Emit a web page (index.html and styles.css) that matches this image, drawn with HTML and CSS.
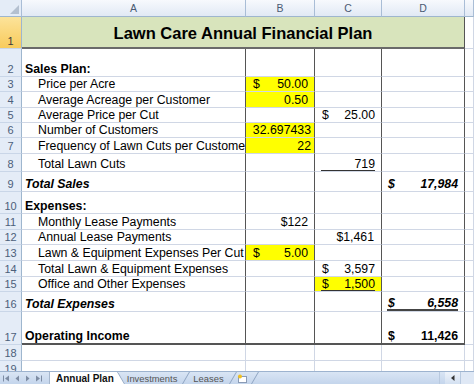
FILE: index.html
```html
<!DOCTYPE html>
<html>
<head>
<meta charset="utf-8">
<link rel="stylesheet" href="styles.css">
</head>
<body>
<div class="app">
  <div class="sheet">
    <table class="grid">
      <colgroup>
        <col class="c-rh"><col class="c-a"><col class="c-b"><col class="c-c"><col class="c-d"><col class="c-e">
      </colgroup>
      <thead>
        <tr class="hdr"><th class="corner"><span class="tri"></span></th><th>A</th><th>B</th><th>C</th><th>D</th><th></th></tr>
      </thead>
      <tbody>
        <tr class="r1"><th class="rh sel">1</th><td colspan="4" class="title">Lawn Care Annual Financial Plan</td><td></td></tr>
        <tr class="r2"><th class="rh">2</th><td class="a lbl bold">Sales Plan:</td><td class="b"></td><td class="c"></td><td class="d"></td><td></td></tr>
        <tr class="r3"><th class="rh">3</th><td class="a ind">Price per Acre</td><td class="b fill"><span class="acct"><span>$</span><span>50.00</span></span></td><td class="c"></td><td class="d"></td><td></td></tr>
        <tr class="r4"><th class="rh">4</th><td class="a ind">Average Acreage per Customer</td><td class="b fill num pr6">0.50</td><td class="c"></td><td class="d"></td><td></td></tr>
        <tr class="r5"><th class="rh">5</th><td class="a ind">Average Price per Cut</td><td class="b"></td><td class="c"><span class="acct"><span>$</span><span>25.00</span></span></td><td class="d"></td><td></td></tr>
        <tr class="r6"><th class="rh">6</th><td class="a ind">Number of Customers</td><td class="b fill num pr3">32.697433</td><td class="c"></td><td class="d"></td><td></td></tr>
        <tr class="r7"><th class="rh">7</th><td class="a ind">Frequency of Lawn Cuts per Customer</td><td class="b fill num pr3">22</td><td class="c"></td><td class="d"></td><td></td></tr>
        <tr class="r8"><th class="rh">8</th><td class="a ind">Total Lawn Cuts</td><td class="b"></td><td class="c"><span class="acct ul"><span></span><span>719</span></span></td><td class="d"></td><td></td></tr>
        <tr class="r9"><th class="rh">9</th><td class="a lbl bold ital">Total Sales</td><td class="b"></td><td class="c"></td><td class="d bold ital"><span class="acct"><span>$</span><span>17,984</span></span></td><td></td></tr>
        <tr class="r10"><th class="rh">10</th><td class="a lbl bold">Expenses:</td><td class="b"></td><td class="c"></td><td class="d"></td><td></td></tr>
        <tr class="r11"><th class="rh">11</th><td class="a ind">Monthly Lease Payments</td><td class="b num pr6">$122</td><td class="c"></td><td class="d"></td><td></td></tr>
        <tr class="r12"><th class="rh">12</th><td class="a ind">Annual Lease Payments</td><td class="b"></td><td class="c num pr7">$1,461</td><td class="d"></td><td></td></tr>
        <tr class="r13"><th class="rh">13</th><td class="a ind">Lawn &amp; Equipment Expenses Per Cut</td><td class="b fill"><span class="acct"><span>$</span><span>5.00</span></span></td><td class="c"></td><td class="d"></td><td></td></tr>
        <tr class="r14"><th class="rh">14</th><td class="a ind">Total Lawn &amp; Equipment Expenses</td><td class="b"></td><td class="c"><span class="acct"><span>$</span><span>3,597</span></span></td><td class="d"></td><td></td></tr>
        <tr class="r15"><th class="rh">15</th><td class="a ind">Office and Other Expenses</td><td class="b"></td><td class="c fill"><span class="acct ul"><span>$</span><span>1,500</span></span></td><td class="d"></td><td></td></tr>
        <tr class="r16"><th class="rh">16</th><td class="a lbl bold ital">Total Expenses</td><td class="b"></td><td class="c"></td><td class="d bold ital"><span class="acct ul2"><span>$</span><span>6,558</span></span></td><td></td></tr>
        <tr class="r17 last"><th class="rh">17</th><td class="a lbl bold">Operating Income</td><td class="b"></td><td class="c"></td><td class="d bold"><span class="acct"><span>$</span><span>11,426</span></span></td><td></td></tr>
        <tr class="r18"><th class="rh">18</th><td></td><td></td><td></td><td></td><td></td></tr>
        <tr class="r19"><th class="rh">19</th><td></td><td></td><td></td><td></td><td></td></tr>
      </tbody>
    </table>
  </div>
  <div class="tabbar">
    <div class="nav">
      <svg width="7" height="7" viewBox="0 0 7 7"><rect x="0" y="0.5" width="1" height="6" fill="#7d8ca3"/><path d="M6 0.5 L2 3.5 L6 6.5 Z" fill="#7d8ca3"/></svg>
      <svg width="5" height="7" viewBox="0 0 5 7"><path d="M4 0.5 L0.5 3.5 L4 6.5 Z" fill="#7d8ca3"/></svg>
      <svg width="5" height="7" viewBox="0 0 5 7"><path d="M1 0.5 L4.5 3.5 L1 6.5 Z" fill="#7d8ca3"/></svg>
      <svg width="7" height="7" viewBox="0 0 7 7"><path d="M1 0.5 L5 3.5 L1 6.5 Z" fill="#7d8ca3"/><rect x="6" y="0.5" width="1" height="6" fill="#7d8ca3"/></svg>
    </div>
    <div class="tab active">Annual Plan</div>
    <div class="tab">Investments</div>
    <div class="tab">Leases</div>
    <div class="tab newsheet"><svg width="11" height="9" viewBox="0 0 11 9"><rect x="1.5" y="2.5" width="8" height="6" fill="#fff" stroke="#8a9bb5"/><circle cx="3" cy="2.5" r="2" fill="#f0c020"/></svg></div>
    <div class="tab endcap"></div>
    <div class="spacer"></div>
    <div class="hscroll"><span class="sbtn"><svg width="4" height="6" viewBox="0 0 4 6"><path d="M3.5 0 L0 3 L3.5 6 Z" fill="#333"/></svg></span><span class="track"></span></div>
  </div>
</div>
</body>
</html>
```

FILE: styles.css
```css
html, body {
  margin: 0;
  padding: 0;
  width: 474px;
  height: 384px;
  overflow: hidden;
  background: #fff;
}
body {
  font-family: "Liberation Sans", Arial, sans-serif;
}
.app {
  display: flex;
  flex-direction: column;
  width: 474px;
  height: 384px;
  overflow: hidden;
}
.sheet {
  flex: 1;
  min-height: 0;
  overflow: hidden;
}
.grid {
  border-collapse: separate;
  border-spacing: 0;
  table-layout: fixed;
  width: 474px;
  font-size: 12.3px;
  color: #000;
}
.c-rh { width: 22px; }
.c-a { width: 224px; }
.c-b { width: 69px; }
.c-c { width: 67px; }
.c-d { width: 83px; }
.c-e { width: 9px; }

.grid td, .grid th {
  padding: 0;
  border-right: 1px solid #d0d7e5;
  border-bottom: 1px solid #d0d7e5;
  overflow: hidden;
  white-space: nowrap;
  vertical-align: bottom;
  line-height: 13px;
  box-sizing: border-box;
  text-align: left;
  font-weight: normal;
}

/* column headers */
.hdr { height: 17px; }
.hdr th {
  background: linear-gradient(#f7f9fd, #e1e9f5);
  border-right-color: #a9bdd6;
  border-bottom-color: #9eb6ce;
  font-size: 10.5px;
  color: #4a5b73;
  text-align: center;
  vertical-align: middle;
}
.hdr th.corner {
  position: relative;
  background: #e4ecf7;
}
.tri {
  position: absolute;
  right: 2px;
  bottom: 2px;
  width: 0;
  height: 0;
  border-left: 9px solid transparent;
  border-bottom: 9px solid #b4c0d0;
}

/* row headers */
.grid th.rh {
  background: #e4ecf7;
  border-right-color: #9eb6ce;
  border-bottom-color: #c9d6e8;
  color: #4c5f7a;
  font-size: 11px;
  text-align: center;
  line-height: 12px;
  padding-bottom: 1px;
}
.grid th.rh.sel {
  background: linear-gradient(#fce39a, #f8cb5c);
  color: #3b3b3b;
}

/* row heights */
.r1 { height: 32px; }
.r2 { height: 28px; }
.r3 { height: 15px; }
.r4 { height: 16px; }
.r5 { height: 15px; }
.r6 { height: 15px; }
.r7 { height: 16px; }
.r8 { height: 18px; }
.r9 { height: 20px; }
.r10 { height: 22px; }
.r11 { height: 16px; }
.r12 { height: 15px; }
.r13 { height: 16px; }
.r14 { height: 16px; }
.r15 { height: 15px; }
.r16 { height: 20px; }
.r17 { height: 33px; }
.r18 { height: 16px; }
.r19 { height: 16px; }

/* title */
.grid td.title {
  background: #d8e4bc;
  font-weight: bold;
  font-size: 16.5px;
  text-align: center;
  vertical-align: middle;
  line-height: 18px;
  padding-top: 1px;
  border-right: 1px solid #555;
  border-bottom: 2px solid #6a6a6a;
}

/* framed table columns */
.grid td.a, .grid td.b, .grid td.c, .grid td.d {
  border-right-color: #555;
}
.grid .last td.a, .grid .last td.b, .grid .last td.c, .grid .last td.d {
  border-bottom: 2px solid #555;
}

.grid td.lbl { padding-left: 3px; }
.grid td.ind { padding-left: 16px; }
.grid td.bold { font-weight: bold; }
.grid td.ital { font-style: italic; }
.grid td.num { text-align: right; }
.grid td.pr3 { padding-right: 3px; }
.grid td.pr6 { padding-right: 6px; }
.grid td.pr7 { padding-right: 7px; }
.grid td.fill { background: #ffff00; }

.acct {
  display: flex;
  justify-content: space-between;
  padding: 0 6px 0 7px;
}
.d .acct { padding: 0 6px 0 6px; }
.acct.ul {
  margin: 0 6px 0 6px;
  padding: 0 0 0 1px;
  border-bottom: 1px solid #333;
  line-height: 12px;
}
.acct.ul2 {
  margin: 0 6px 0 5px;
  padding: 0 0 0 1px;
  border-bottom: 2px solid #444;
  line-height: 12px;
}

/* sheet tabs */
.tabbar {
  flex: 0 0 12px;
  height: 12px;
  display: flex;
  align-items: stretch;
  background: linear-gradient(#d9e5f4, #c4d5ec);
  border-top: 1px solid #9db3cf;
  font-size: 9.4px;
  color: #555;
  overflow: hidden;
}
.nav {
  width: 46px;
  display: flex;
  align-items: center;
  justify-content: space-between;
  padding: 0 4px 0 3px;
  box-sizing: border-box;
}
.tab {
  position: relative;
  display: flex;
  align-items: flex-end;
  padding: 0 4px 0 12px;
  line-height: 11px;
  white-space: nowrap;
}
.tab::before {
  content: "";
  position: absolute;
  left: 1px;
  top: 0;
  bottom: 0;
  width: 6px;
  border-left: 1px solid #8fa5c2;
  transform: skewX(-30deg);
  transform-origin: bottom left;
}
.tab.active {
  background: #fff;
  color: #111;
  font-weight: bold;
  font-size: 10px;
  padding: 0 5px 0 6px;
  margin-left: 3px;
  border-left: 1px solid #a5b6cc;
}
.tab.active::before {
  left: auto;
  right: -6px;
  width: 6px;
  border-left: 0;
  border-right: 1px solid #8fa5c2;
  background: #fff;
  transform: skewX(30deg);
  transform-origin: bottom right;
}
.tab.active + .tab { padding-left: 8px; }
.tab.active + .tab::before { display: none; }
.tab.newsheet {
  padding: 0 2px 0 9px;
  align-items: center;
}
.tab.endcap {
  padding: 0 0 0 6px;
}
.spacer { flex: 1; }
.hscroll {
  width: 34px;
  display: flex;
  border-left: 1px solid #b8c9df;
}
.sbtn {
  width: 15px;
  display: flex;
  align-items: center;
  justify-content: center;
  background: linear-gradient(#eef3fa, #d3e0f1);
  border-right: 1px solid #b8c9df;
  margin-left: 5px;
}
.track {
  flex: 1;
  background: #dfe8f5;
}
```
